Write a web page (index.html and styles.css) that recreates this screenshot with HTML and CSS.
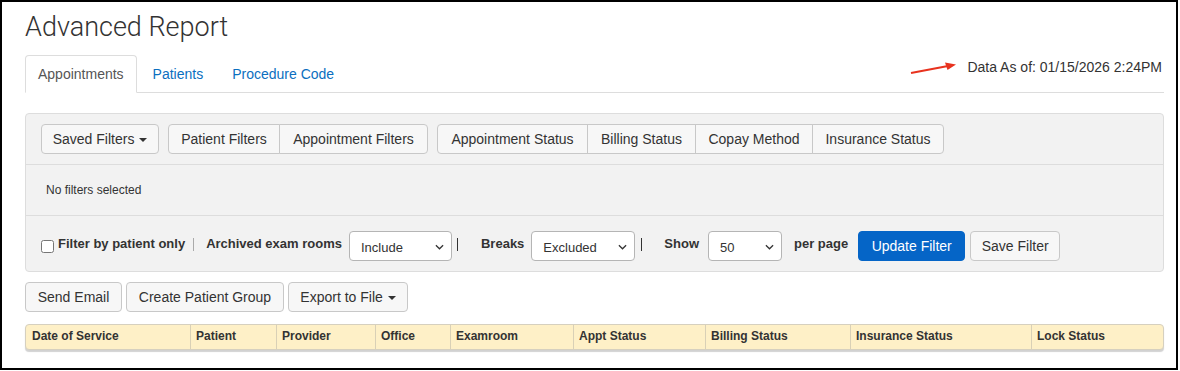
FILE: index.html
```html
<!DOCTYPE html>
<html>
<head>
<meta charset="utf-8">
<title>Advanced Report</title>
<link rel="stylesheet" href="styles.css">
</head>
<body>
<div class="frame">
  <h1 class="title">Advanced Report</h1>
  <div class="tabbar">
    <a class="tab active">Appointments</a>
    <a class="tab">Patients</a>
    <a class="tab">Procedure Code</a>
    <span class="data-as-of">Data As of: 01/15/2026 2:24PM</span>
    <svg class="arrow" width="50" height="14" viewBox="0 0 50 14">
      <line x1="1" y1="12" x2="38" y2="5" stroke="#e8321e" stroke-width="2"/>
      <polygon points="46,3.5 35,1.5 37.5,9" fill="#e8321e"/>
    </svg>
  </div>

  <div class="panel">
    <div class="panel-head">
      <button class="btn w-saved">Saved Filters <span class="caret"></span></button>
      <div class="btn-group">
        <button class="btn w-pf">Patient Filters</button>
        <button class="btn w-af">Appointment Filters</button>
      </div>
      <div class="btn-group">
        <button class="btn w-as">Appointment Status</button>
        <button class="btn w-bs">Billing Status</button>
        <button class="btn w-cm">Copay Method</button>
        <button class="btn w-is">Insurance Status</button>
      </div>
    </div>
    <div class="panel-body">No filters selected</div>
    <div class="panel-foot">
      <input type="checkbox" class="chk">
      <label class="lbl lbl-patient">Filter by patient only</label>
      <span class="pipe light pipe1"></span>
      <label class="lbl lbl-archived">Archived exam rooms</label>
      <div class="select sel-include"><span>Include</span><svg width="9" height="6" viewBox="0 0 10 6"><path d="M1 1l4 4 4-4" fill="none" stroke="#333" stroke-width="1.4"/></svg></div>
      <span class="pipe pipe2"></span>
      <label class="lbl lbl-breaks">Breaks</label>
      <div class="select sel-breaks"><span>Excluded</span><svg width="9" height="6" viewBox="0 0 10 6"><path d="M1 1l4 4 4-4" fill="none" stroke="#333" stroke-width="1.4"/></svg></div>
      <span class="pipe pipe3"></span>
      <label class="lbl lbl-show">Show</label>
      <div class="select sel-show"><span>50</span><svg width="9" height="6" viewBox="0 0 10 6"><path d="M1 1l4 4 4-4" fill="none" stroke="#333" stroke-width="1.4"/></svg></div>
      <label class="lbl lbl-per">per page</label>
      <button class="btn btn-primary btn-update">Update Filter</button>
      <button class="btn btn-save">Save Filter</button>
    </div>
  </div>

  <div class="actions">
    <button class="btn w-send">Send Email</button>
    <button class="btn w-create">Create Patient Group</button>
    <button class="btn w-export">Export to File <span class="caret"></span></button>
  </div>

  <div class="thead">
    <div class="th">Date of Service</div>
    <div class="th">Patient</div>
    <div class="th">Provider</div>
    <div class="th">Office</div>
    <div class="th">Examroom</div>
    <div class="th">Appt Status</div>
    <div class="th">Billing Status</div>
    <div class="th">Insurance Status</div>
    <div class="th">Lock Status</div>
  </div>
</div>
</body>
</html>
```

FILE: styles.css
```css
* { box-sizing: border-box; }

html, body {
  margin: 0;
  padding: 0;
  background: #fff;
}

body {
  font-family: "Liberation Sans", Arial, sans-serif;
  font-size: 14px;
  color: #333;
}

.frame {
  width: 1178px;
  height: 370px;
  border: 2px solid #000;
  padding: 0 12px 0 23px;
}

.title {
  margin: 9px 0 0;
  font-family: Roboto, "Liberation Sans", sans-serif;
  font-weight: 300;
  font-size: 27px;
  line-height: 32px;
  color: #333;
}

.tabbar {
  position: relative;
  margin-top: 12px;
  display: flex;
  align-items: flex-end;
  border-bottom: 1px solid #ddd;
  height: 38px;
}

.tab {
  display: block;
  padding: 8px 12px;
  line-height: 20px;
  border: 1px solid transparent;
  border-radius: 4px 4px 0 0;
  margin-right: 3px;
  margin-bottom: -1px;
  color: #0b6fc0;
  text-decoration: none;
}

.tab.active {
  color: #555;
  background: #fff;
  border-color: #ddd #ddd transparent;
}

.data-as-of {
  margin-left: auto;
  margin-right: 2px;
  align-self: flex-start;
  margin-top: 2px;
  line-height: 20px;
  color: #333;
}

.arrow {
  position: absolute;
  left: 885px;
  top: 6px;
}

.panel {
  margin-top: 20px;
  background: #f2f2f2;
  border: 1px solid #ddd;
  border-radius: 4px;
}

.panel-head {
  display: flex;
  gap: 9px;
  padding: 10px 15px;
  border-bottom: 1px solid #ddd;
}

.panel-body {
  padding: 17px 20px 16px;
  font-size: 12px;
  line-height: 17px;
  color: #333;
}

.panel-foot {
  display: flex;
  align-items: center;
  border-top: 1px solid #ddd;
  padding: 15px 15px 10px;
}

.btn {
  font-family: "Liberation Sans", Arial, sans-serif;
  font-size: 14px;
  line-height: 20px;
  height: 30px;
  padding: 4px 0;
  text-align: center;
  color: #333;
  background: #f7f7f7;
  border: 1px solid #c8c8c8;
  border-radius: 4px;
  white-space: nowrap;
}

.w-saved { width: 118px; }
.w-pf { width: 112px; }
.w-af { width: 149px; }
.w-as { width: 151px; }
.w-bs { width: 109px; }
.w-cm { width: 118px; }
.w-is { width: 132px; }
.w-send { width: 97px; }
.w-create { width: 158px; }
.w-export { width: 120px; }

.caret {
  display: inline-block;
  width: 0;
  height: 0;
  margin-left: 1px;
  vertical-align: middle;
  border-top: 4px solid #333;
  border-left: 4px solid transparent;
  border-right: 4px solid transparent;
}

.btn-group {
  display: flex;
}

.btn-group .btn {
  border-radius: 0;
}

.btn-group .btn + .btn {
  margin-left: -1px;
}

.btn-group .btn:first-child {
  border-radius: 4px 0 0 4px;
}

.btn-group .btn:last-child {
  border-radius: 0 4px 4px 0;
}

.chk {
  margin: 0;
  width: 13px;
  height: 13px;
}

.lbl {
  font-weight: bold;
  font-size: 13px;
  line-height: 20px;
  margin-bottom: 4px;
  color: #333;
  white-space: nowrap;
}

.lbl-patient { margin-left: 4px; }
.lbl-archived { margin-left: 12px; }
.lbl-breaks { margin-left: 23px; }
.lbl-show { margin-left: 22px; }
.lbl-per { margin-left: 12px; }

.pipe {
  width: 1px;
  height: 13px;
  background: #333;
  margin-bottom: 3px;
}

.pipe.light { background: #aaa; }
.pipe1 { margin-left: 8px; }
.pipe2 { margin-left: 5px; }
.pipe3 { margin-left: 6px; }

.select {
  display: flex;
  align-items: center;
  justify-content: space-between;
  height: 30px;
  padding: 2px 7px 0 11px;
  background: #fff;
  border: 1px solid #b5b5b5;
  border-radius: 4px;
  font-size: 13px;
  color: #333;
}

.sel-include { margin-left: 7px; width: 103px; }
.sel-breaks { margin-left: 7px; width: 104px; }
.sel-show { margin-left: 9px; width: 74px; }

.btn-primary {
  background: #0565c7;
  border-color: #0565c7;
  color: #fff;
}

.btn-update { margin-left: 10px; width: 107px; }
.btn-save { margin-left: 5px; width: 90px; }

.actions {
  display: flex;
  gap: 4px;
  margin-top: 10px;
}

.thead {
  margin-top: 12px;
  display: grid;
  grid-template-columns: 164px 86px 99px 75px 123px 132px 145px 181px 1fr;
  background: #fef0c7;
  border: 1px solid #d6d0bf;
  border-radius: 4px;
  box-shadow: 0 2px 1px rgba(0, 0, 0, 0.18);
}

.th {
  padding: 3px 6px 4px;
  font-size: 12px;
  font-weight: bold;
  line-height: 17px;
  color: #333;
  white-space: nowrap;
}

.th + .th {
  border-left: 1px solid #d9d0b6;
  padding-left: 5px;
}
```
